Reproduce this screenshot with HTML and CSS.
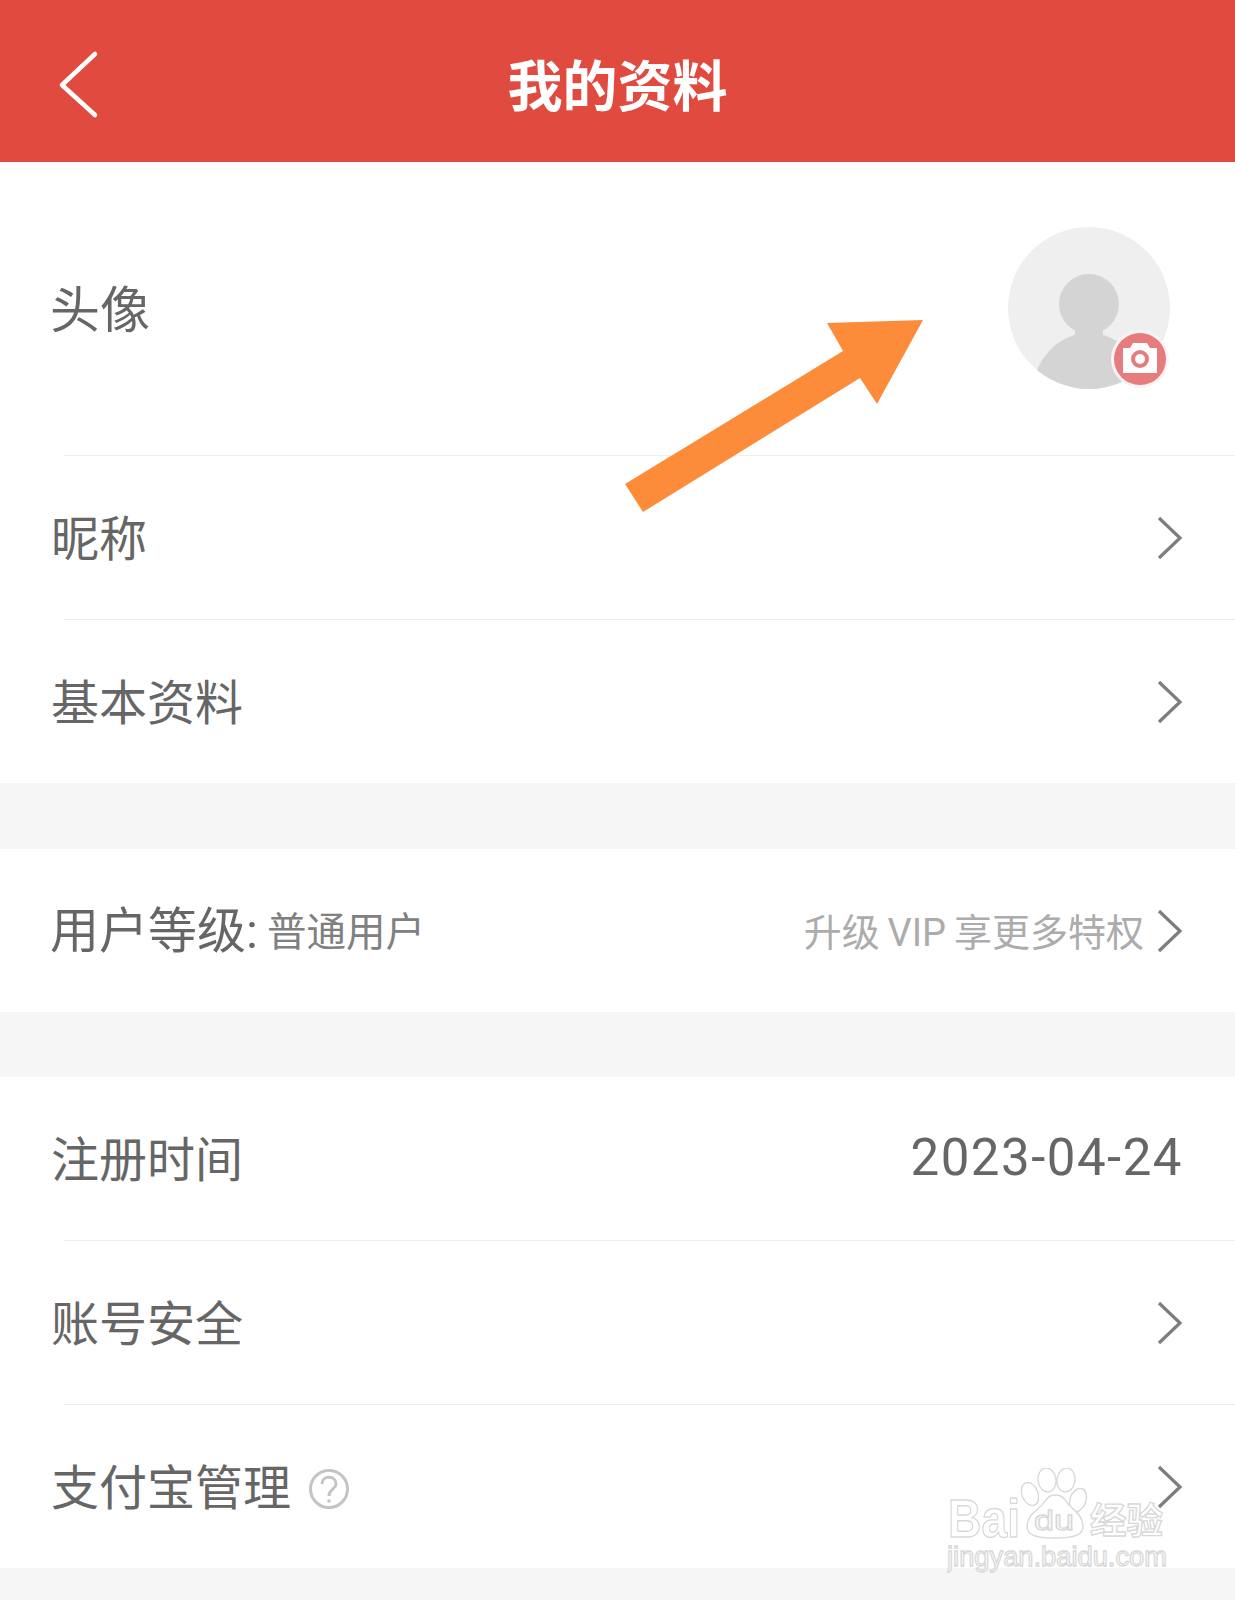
FILE: index.html
```html
<!DOCTYPE html>
<html lang="zh">
<head>
<meta charset="utf-8">
<title>我的资料</title>
<link rel="stylesheet" href="styles.css">
</head>
<body>
<div class="page">
  <header class="topbar">
    <svg class="back" viewBox="0 0 44 72"><path d="M38 5 L5 36 L38 66"/></svg>
    <h1 class="title">我的资料</h1>
  </header>

  <section class="group group-profile">
    <div class="row row-avatar">
      <span class="label label-lg">头像</span>
      <svg class="avatar" viewBox="0 0 168 168">
        <defs><clipPath id="avatar-clip"><circle cx="82" cy="82" r="81"/></clipPath></defs>
        <circle cx="82" cy="82" r="81" fill="#efefef"/>
        <g clip-path="url(#avatar-clip)" fill="#d4d4d4">
          <circle cx="82" cy="78" r="30"/>
          <ellipse cx="82" cy="170" rx="57" ry="63"/>
          <rect x="68" y="100" width="28" height="14"/>
        </g>
        <circle cx="133" cy="133" r="29" fill="#fbf3f3"/>
        <circle cx="133" cy="133" r="26" fill="#e67c7e"/>
        <path d="M116 122 H123 L126 117 H140 L143 122 H150 V147 H116 Z" fill="#fff"/>
        <circle cx="133" cy="133" r="9" fill="#e67c7e"/>
        <circle cx="133" cy="133" r="5" fill="#fff"/>
      </svg>
    </div>
    <div class="divider"></div>
    <div class="row">
      <span class="label">昵称</span>
      <svg class="chev" viewBox="0 0 26 44"><path d="M2 2 L23 22 L2 42"/></svg>
    </div>
    <div class="divider"></div>
    <div class="row">
      <span class="label">基本资料</span>
      <svg class="chev" viewBox="0 0 26 44"><path d="M2 2 L23 22 L2 42"/></svg>
    </div>
  </section>

  <section class="group">
    <div class="row">
      <div class="level">
        <span class="label label-level">用户等级:</span>
        <span class="level-value">普通用户</span>
      </div>
      <div class="row-end">
        <span class="upgrade">升级 VIP 享更多特权</span>
        <svg class="chev" viewBox="0 0 26 44"><path d="M2 2 L23 22 L2 42"/></svg>
      </div>
    </div>
  </section>

  <section class="group">
    <div class="row">
      <span class="label">注册时间</span>
      <span class="date">2023-04-24</span>
    </div>
    <div class="divider"></div>
    <div class="row">
      <span class="label">账号安全</span>
      <svg class="chev" viewBox="0 0 26 44"><path d="M2 2 L23 22 L2 42"/></svg>
    </div>
    <div class="divider"></div>
    <div class="row">
      <div class="level">
        <span class="label">支付宝管理</span>
        <svg class="help" viewBox="0 0 40 40">
          <circle cx="20" cy="20" r="18.5"/>
          <path d="M13 15 C13 6 27 6 27 15 C27 20 20 20 20 27"/>
          <circle class="help-dot" cx="20" cy="32" r="1.8"/>
        </svg>
      </div>
      <svg class="chev" viewBox="0 0 26 44"><path d="M2 2 L23 22 L2 42"/></svg>
    </div>
  </section>

  <svg class="arrow" viewBox="0 0 320 200">
    <polygon points="5,164 23,192 240,58 257,84 303,0 207,3 223,31"/>
  </svg>

  <svg class="watermark" viewBox="0 0 230 110">
    <text class="wm-bai" x="1" y="69" textLength="72" lengthAdjust="spacingAndGlyphs">Bai</text>
    <g class="wm-paw">
      <ellipse cx="83" cy="26" rx="8" ry="12" transform="rotate(-22 83 26)"/>
      <ellipse cx="100" cy="12" rx="9" ry="12" transform="rotate(-8 100 12)"/>
      <ellipse cx="119" cy="12" rx="9" ry="12" transform="rotate(8 119 12)"/>
      <ellipse cx="131" cy="32" rx="8" ry="12" transform="rotate(20 131 32)"/>
      <path d="M80 58 C81 44 93 42 98 33 C103 25 114 25 119 33 C124 42 135 44 136 58 C136 67 128 70 108 70 C88 70 80 67 80 58 Z"/>
    </g>
    <text class="wm-du" x="87" y="62" textLength="40" lengthAdjust="spacingAndGlyphs">du</text>
    <text class="wm-jy" x="143" y="66" textLength="73" lengthAdjust="spacingAndGlyphs">经验</text>
    <text class="wm-url" x="0" y="98" textLength="220" lengthAdjust="spacingAndGlyphs">jingyan.baidu.com</text>
  </svg>
</div>
</body>
</html>
```

FILE: styles.css
```css
* {
  box-sizing: border-box;
}

html,
body {
  margin: 0;
  padding: 0;
}

body {
  background: #f6f6f6;
  font-family: "Noto Sans CJK SC", "Noto Sans", "Liberation Sans", sans-serif;
  color: #666;
}

.page {
  position: relative;
  width: 1235px;
  height: 1600px;
  overflow: hidden;
  background: #f6f6f6;
}

.topbar {
  display: flex;
  align-items: center;
  justify-content: center;
  position: relative;
  height: 162px;
  padding-top: 2px;
  background: #e04a3f;
}

.title {
  margin: 0;
  color: #fff;
  font-size: 55px;
  font-weight: 700;
  line-height: 1;
}

.back {
  position: absolute;
  left: 57px;
  top: 49px;
  width: 44px;
  height: 72px;
}

.back path {
  fill: none;
  stroke: #fff;
  stroke-width: 4.5;
  stroke-linecap: round;
  stroke-linejoin: round;
}

.group {
  background: #fff;
  margin-bottom: 65px;
}

.group-profile {
  margin-bottom: 66px;
}

.row {
  display: flex;
  align-items: center;
  justify-content: space-between;
  height: 163px;
  padding: 0 52px 0 51px;
}

.row-avatar {
  height: 293px;
  padding-right: 60px;
}

.divider {
  height: 1px;
  margin-left: 64px;
  background: #efefef;
}

.label {
  margin-bottom: 6px;
  font-size: 48px;
  line-height: 1;
  color: #666;
}

.label-lg {
  margin-left: -1px;
  font-size: 50px;
}

.label-level {
  margin-top: 2px;
  margin-bottom: 0;
  margin-left: -1px;
  font-size: 49px;
  font-family: Roboto, "Noto Sans CJK SC", sans-serif;
}

.level {
  display: flex;
  align-items: center;
}

.level-value {
  margin-bottom: 4px;
  margin-left: 9px;
  font-size: 39.5px;
  line-height: 1;
  color: #808080;
}

.row-end {
  display: flex;
  align-items: center;
  gap: 13px;
}

.upgrade {
  margin-top: 4px;
  font-family: Roboto, "Noto Sans CJK SC", sans-serif;
  font-size: 38px;
  word-spacing: -1.5px;
  line-height: 1;
  color: #acacac;
}

.date {
  margin-bottom: 2px;
  font-family: Roboto, "Noto Sans CJK SC", sans-serif;
  font-size: 51px;
  line-height: 1;
  letter-spacing: 1.5px;
  color: #666;
}

.avatar {
  display: block;
  flex: none;
  width: 168px;
  height: 168px;
  margin-top: 2px;
}

.chev {
  display: block;
  width: 26px;
  height: 44px;
  flex: none;
}

.chev path {
  fill: none;
  stroke: #7d7d7d;
  stroke-width: 3.2;
}

.help {
  display: block;
  width: 40px;
  height: 40px;
  margin-top: 5px;
  margin-left: 18px;
}

.help circle,
.help path {
  fill: none;
  stroke: #c4c4c4;
  stroke-width: 3;
}

.help .help-dot {
  fill: #c4c4c4;
  stroke: none;
}

.arrow {
  position: absolute;
  left: 620px;
  top: 320px;
  width: 320px;
  height: 200px;
}

.arrow polygon {
  fill: #fd8c3a;
}

.watermark {
  position: absolute;
  left: 947px;
  top: 1468px;
  width: 230px;
  height: 110px;
}

.watermark text {
  font-family: "Liberation Sans", "Noto Sans CJK SC", sans-serif;
  fill: #fff;
  stroke: #d8d8d8;
  stroke-width: 1.3;
}

.wm-bai {
  font-size: 54px;
  font-weight: 700;
}

.wm-du {
  font-size: 28px;
}

.wm-jy {
  font-size: 36px;
  font-weight: 700;
}

.wm-url {
  font-size: 27px;
}

.wm-paw ellipse,
.wm-paw path {
  fill: #fff;
  stroke: #d8d8d8;
  stroke-width: 1.4;
}
```
